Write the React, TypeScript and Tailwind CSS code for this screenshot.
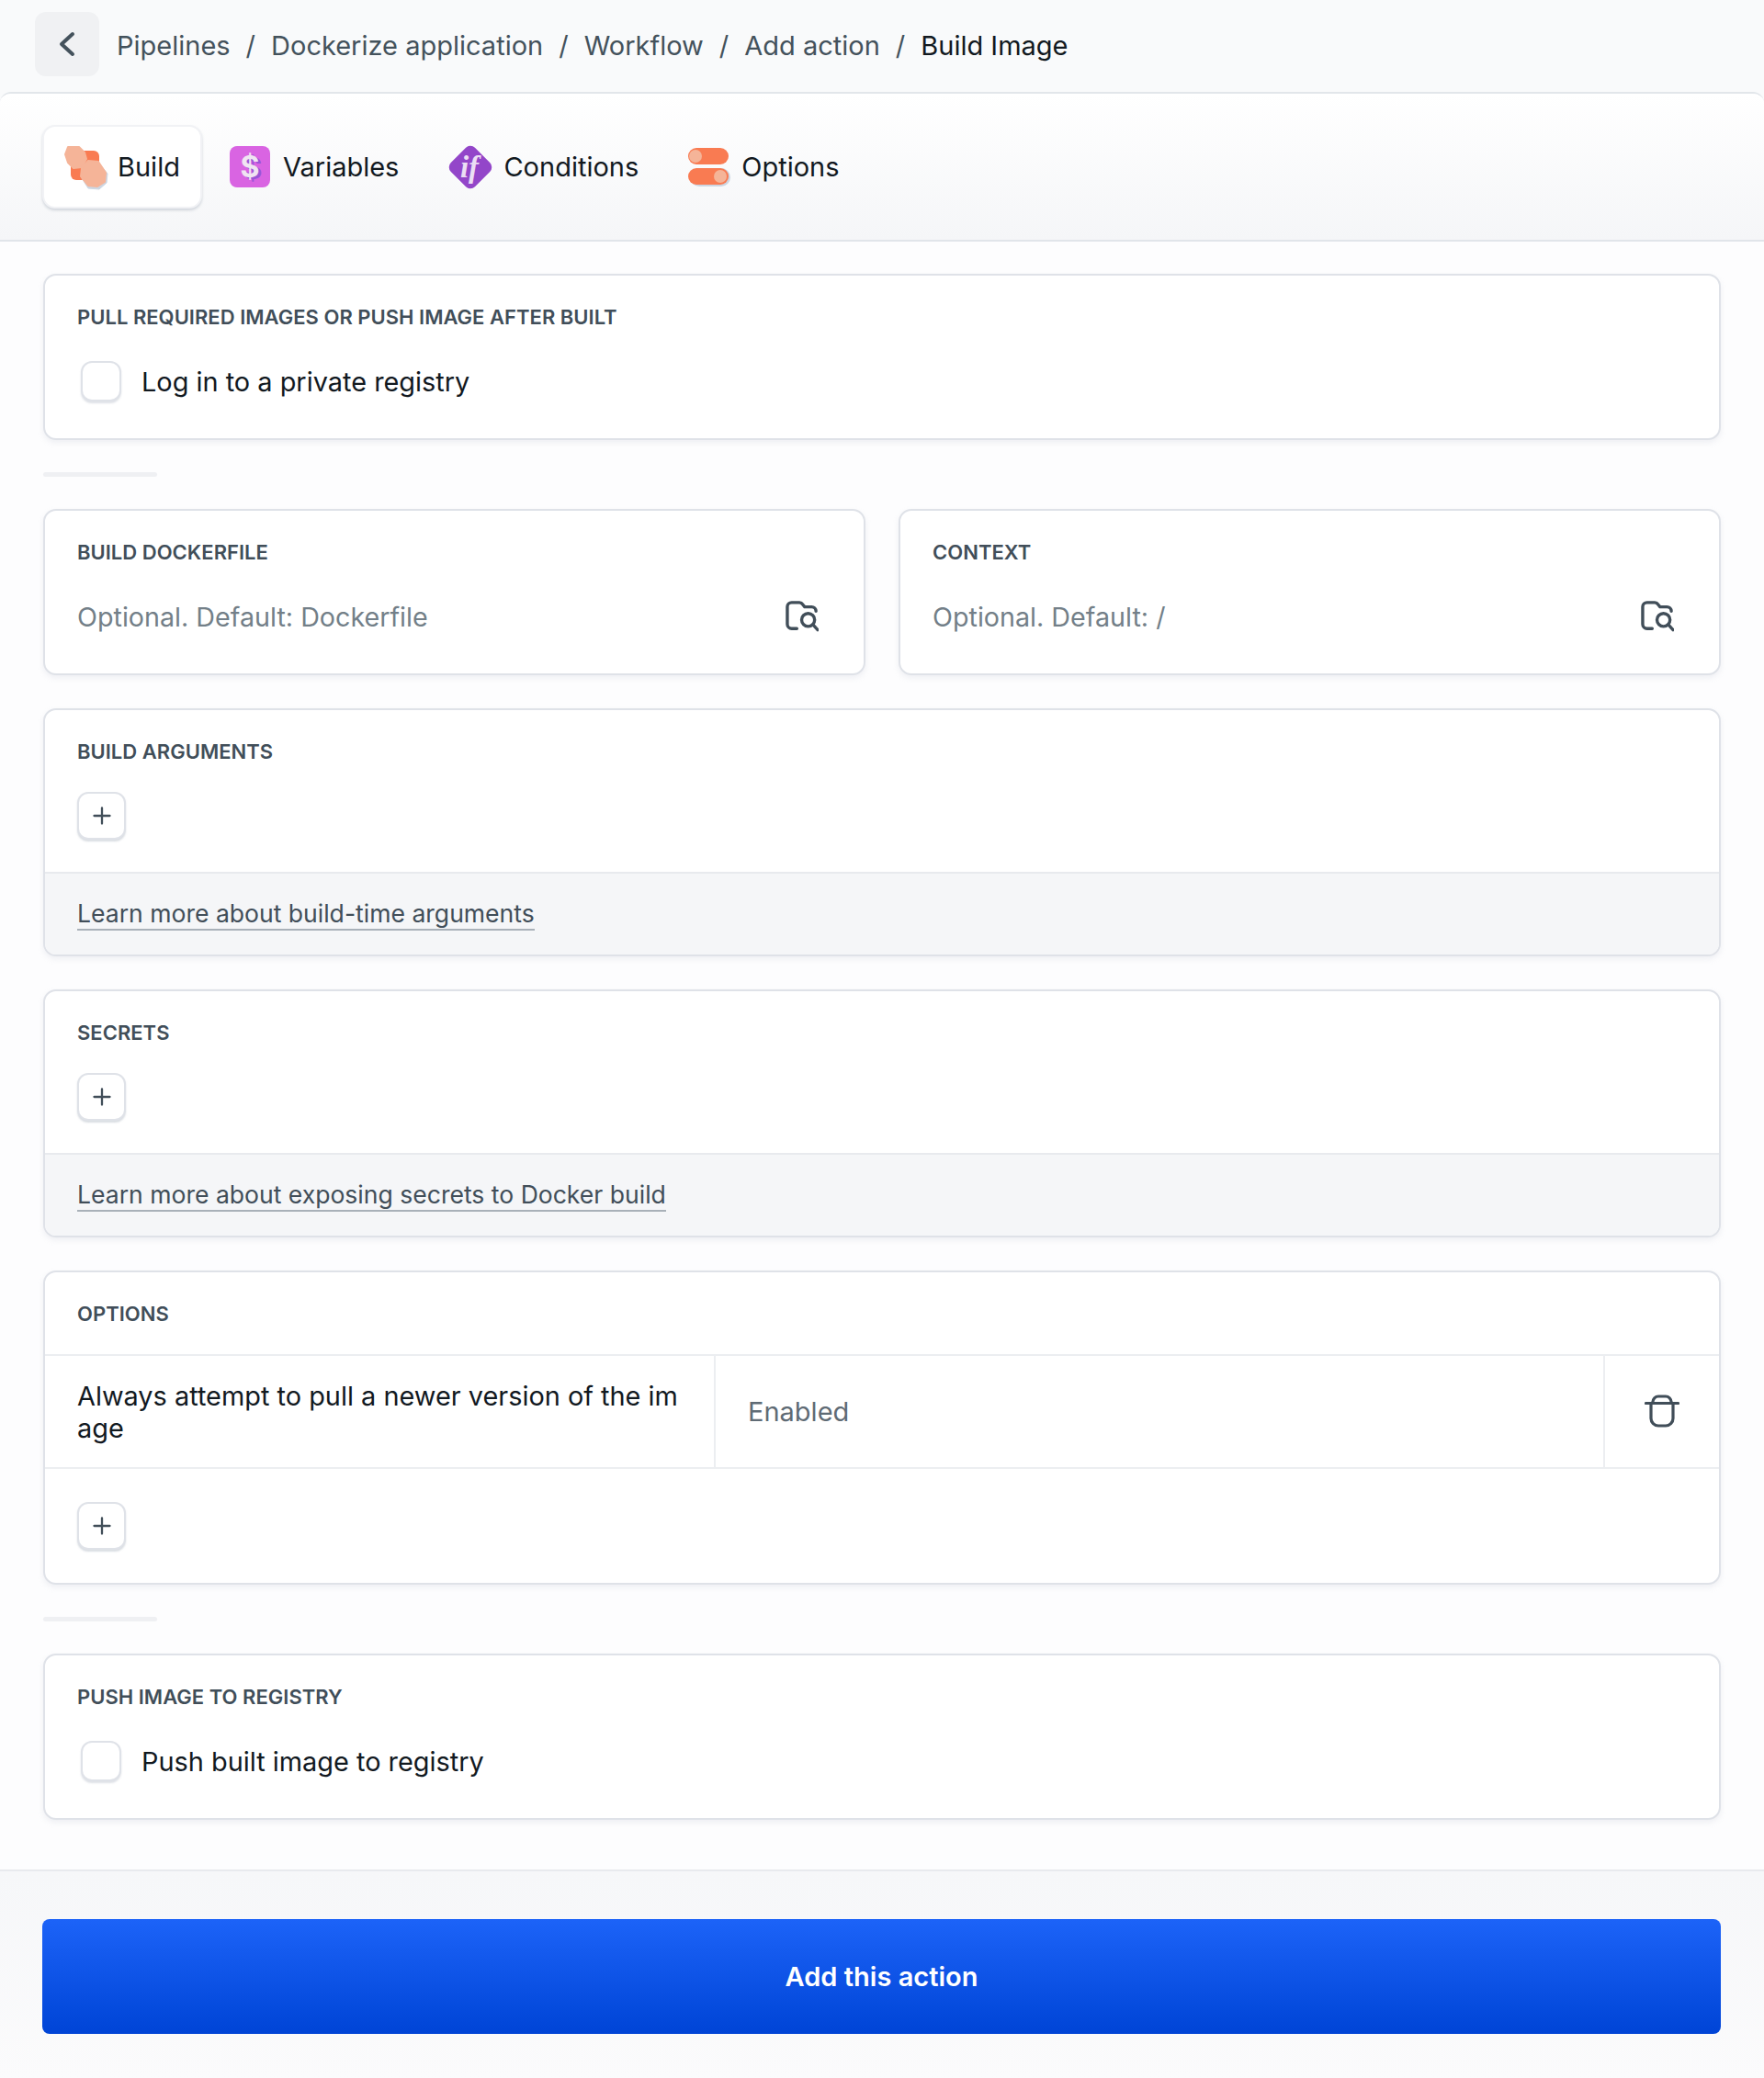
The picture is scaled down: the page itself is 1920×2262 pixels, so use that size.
import React from "react";

const FONT = "font-['Inter','Liberation_Sans',sans-serif]";

function Label({ children }: { children: React.ReactNode }) {
  return <div className="h-[24px] text-[22px] leading-[24px] font-semibold tracking-[0.02px] text-[#414e59]">{children}</div>;
}

function FolderSearch() {
  return (
    <svg width="36" height="34" viewBox="0 0 38 36" fill="none" stroke="#414e59" strokeWidth="3.6" strokeLinecap="round" strokeLinejoin="round">
      <path d="M13 32H7a5 5 0 0 1-5-5V7a5 5 0 0 1 5-5h9c2 0 3 1 4 2.5L22 7h8a5 5 0 0 1 5 5" />
      <circle cx="26" cy="22" r="7.5" />
      <path d="M31.5 27.5L37 33.5" />
    </svg>
  );
}

function Trash() {
  return (
    <svg className="mb-[2px]" width="38" height="36" viewBox="0 0 38 36" fill="none" stroke="#414e59" strokeWidth="3.2" strokeLinecap="round" strokeLinejoin="round">
      <path d="M1.5 9.5H36.5" />
      <path d="M9 9V8a6 6 0 0 1 6-6h8a6 6 0 0 1 6 6v1" />
      <path d="M7 10v16a8 8 0 0 0 8 8h8a8 8 0 0 0 8-8V10" />
    </svg>
  );
}

function Plus() {
  return (
    <button className="w-[53px] h-[52px] rounded-[12px] border-2 border-[#dfe2e8] bg-white shadow-[0_2px_2px_rgba(150,160,175,0.35)] flex items-center justify-center">
      <svg width="20" height="20" viewBox="0 0 20 20" fill="none" stroke="#414e59" strokeWidth="2.3" strokeLinecap="round">
        <path d="M10 1.5V18.5M1.5 10H18.5" />
      </svg>
    </button>
  );
}

function Checkbox({ text }: { text: string }) {
  return (
    <div className="mt-[36px] h-[44px] pl-[4px] flex items-center gap-[22px]">
      <div className="w-[44px] h-[44px] rounded-[12px] border-2 border-[#dfe2e8] bg-white shadow-[0_2px_2px_rgba(150,160,175,0.3)]" />
      <span className="pt-[1px] text-[28.9px] text-[#12191f]">{text}</span>
    </div>
  );
}

function Card({ children, className = "" }: { children: React.ReactNode; className?: string }) {
  return (
    <div className={"rounded-[14px] border-2 border-[#dfe2e8] bg-white shadow-[0_3px_6px_rgba(170,180,195,0.18)] overflow-hidden " + className}>
      {children}
    </div>
  );
}

function CheckCard({ label, text }: { label: string; text: string }) {
  return (
    <Card>
      <div className="pt-[33px] px-[35px] pb-[40px]">
        <Label>{label}</Label>
        <Checkbox text={text} />
      </div>
    </Card>
  );
}

function InputCard({ label, placeholder }: { label: string; placeholder: string }) {
  return (
    <Card className="flex-1">
      <div className="pt-[33px] px-[35px] pb-[40px]">
        <Label>{label}</Label>
        <div className="mt-[36px] h-[44px] flex items-center justify-between pr-[14px]">
          <span className="pt-[1px] text-[28.7px] text-[#737f88]">{placeholder}</span>
          <FolderSearch />
        </div>
      </div>
    </Card>
  );
}

function AddCard({ label, link }: { label: string; link: string }) {
  return (
    <Card>
      <div className="pt-[33px] px-[35px] pb-[35px] border-b-2 border-[#e8eaee]">
        <Label>{label}</Label>
        <div className="mt-[32px]">
          <Plus />
        </div>
      </div>
      <div className="h-[88px] bg-[#f5f6f8] px-[35px] flex items-center">
        <span className="text-[26.55px] leading-[34px] text-[#414e59] border-b-2 border-[#a9b1b9]">{link}</span>
      </div>
    </Card>
  );
}

function Divider() {
  return <div className="w-[124px] h-[5px] rounded-full bg-[#eff0f3] my-[35px]" />;
}

function BuildIcon() {
  return (
    <svg width="48" height="50" viewBox="0 0 48 50" strokeLinejoin="round">
      <rect x="7" y="7" width="31" height="32" rx="6" fill="#f97b52" />
      <polygon points="4,3 16,3 22,9 24,16 19,25 10,26 4,20 1,11" fill="#f5b498" stroke="#f5b498" strokeWidth="2" />
      <polygon points="27,20 38,21 47,32 46,42 38,49 26,48 19,37 20,27" fill="#cdd6e2" stroke="#cdd6e2" strokeWidth="1" />
      <polygon points="26,18 37,19 45,31 44,41 36,46 26,45 18,35 19,26" fill="#f5b498" stroke="#f5b498" strokeWidth="2" />
    </svg>
  );
}

function VariablesIcon() {
  return (
    <svg width="44" height="45" viewBox="0 0 44 45">
      <rect width="44" height="45" rx="8" fill="#d964e2" />
      <text x="25" y="36" textAnchor="middle" fontFamily="Inter, sans-serif" fontSize="32" fontWeight="700" fill="#9a55d6">$</text>
      <text x="22" y="34" textAnchor="middle" fontFamily="Inter, sans-serif" fontSize="32" fontWeight="700" fill="#f0e4f2">$</text>
    </svg>
  );
}

function ConditionsIcon() {
  return (
    <svg width="48" height="48" viewBox="0 0 48 48">
      <rect x="5.5" y="5.5" width="37" height="37" rx="7" fill="#9346c9" transform="rotate(45 24 24)" />
      <text x="23" y="35" textAnchor="middle" fontFamily="'Liberation Serif', serif" fontStyle="italic" fontWeight="700" fontSize="33" fill="#ecdff4">if</text>
    </svg>
  );
}

function OptionsIcon() {
  return (
    <svg width="46" height="42" viewBox="0 0 46 42">
      <rect x="2" y="22" width="44" height="20" rx="10" fill="#cdd6e2" />
      <rect width="44" height="18" rx="9" fill="#f97b52" />
      <circle cx="8" cy="9" r="7" fill="#f5b498" />
      <rect y="22" width="44" height="18" rx="9" fill="#f97b52" />
      <circle cx="35" cy="31" r="7" fill="#f5b498" />
    </svg>
  );
}

function Tab({ icon, text, active = false, className = "" }: { icon: React.ReactNode; text: string; active?: boolean; className?: string }) {
  return (
    <div
      className={
        "h-[91px] flex items-center rounded-[14px] " +
        (active ? "bg-white border-2 border-[#f1f2f5] shadow-[0_2px_3px_rgba(150,160,175,0.4)] " : "") +
        className
      }
    >
      {icon}
      <span className="text-[29px] text-[#12191f]">{text}</span>
    </div>
  );
}

function Crumb({ children, current = false }: { children: React.ReactNode; current?: boolean }) {
  return <span className={current ? "text-[#12191f]" : "text-[#44525c]"}>{children}</span>;
}

export default function App() {
  return (
    <div className={FONT + " w-[1920px] h-[2262px] bg-[#f9fafb] flex flex-col overflow-hidden"}>
      <header className="h-[100px] shrink-0 flex items-center pl-[38px]">
        <div className="self-start mt-[13px] w-[70px] h-[70px] rounded-[12px] bg-[#f0f1f3] flex items-center justify-center">
          <svg width="20" height="28" viewBox="0 0 20 28" fill="none" stroke="#44525c" strokeWidth="4" strokeLinecap="round" strokeLinejoin="round">
            <path d="M16 3L4 14L16 25" />
          </svg>
        </div>
        <nav className="ml-[19px] flex items-center gap-[17px] text-[29px]">
          <Crumb>Pipelines</Crumb>
          <span className="text-[#44525c]">/</span>
          <Crumb>Dockerize application</Crumb>
          <span className="text-[#44525c]">/</span>
          <Crumb>Workflow</Crumb>
          <span className="text-[#44525c]">/</span>
          <Crumb>Add action</Crumb>
          <span className="text-[#44525c]">/</span>
          <Crumb current>Build Image</Crumb>
        </nav>
      </header>

      <div className="flex-1 bg-[#fdfdfe] rounded-t-[12px] border-t-2 border-[#e2e6ea] flex flex-col overflow-hidden">
        <div className="h-[161px] shrink-0 bg-gradient-to-b from-white to-[#f5f6f8] border-b-2 border-[#e1e5ea] pl-[46px] pt-[34px]">
          <div className="flex items-start gap-[6px]">
            <Tab active icon={<BuildIcon />} text="Build" className="px-[22px] gap-[10px]" />
            <Tab icon={<VariablesIcon />} text="Variables" className="px-[24px] gap-[14px]" />
            <Tab icon={<ConditionsIcon />} text="Conditions" className="px-[24px] gap-[12px]" />
            <Tab icon={<OptionsIcon />} text="Options" className="px-[24px] gap-[12px]" />
          </div>
        </div>

        <main className="px-[47px] pt-[35px] flex flex-col h-[1772px] shrink-0">
          <CheckCard label="PULL REQUIRED IMAGES OR PUSH IMAGE AFTER BUILT" text="Log in to a private registry" />
          <Divider />
          <div className="flex gap-[36px]">
            <InputCard label="BUILD DOCKERFILE" placeholder="Optional. Default: Dockerfile" />
            <InputCard label="CONTEXT" placeholder="Optional. Default: /" />
          </div>
          <div className="mt-[36px] flex flex-col gap-[36px]">
            <AddCard label="BUILD ARGUMENTS" link="Learn more about build-time arguments" />
            <AddCard label="SECRETS" link="Learn more about exposing secrets to Docker build" />
            <Card>
              <div className="h-[91px] pt-[33px] px-[35px] border-b-2 border-[#eceef1]">
                <Label>OPTIONS</Label>
              </div>
              <div className="flex h-[123px] border-b-2 border-[#eceef1]">
                <div className="w-[730px] shrink-0 border-r-2 border-[#eceef1] px-[35px] flex items-center">
                  <span className="text-[28.9px] leading-[35px] text-[#12191f] break-all">
                    Always attempt to pull a newer version of the image
                  </span>
                </div>
                <div className="flex-1 px-[35px] flex items-center text-[29px] text-[#5f6b75]">Enabled</div>
                <div className="w-[126px] shrink-0 border-l-2 border-[#eceef1] flex items-center justify-center">
                  <Trash />
                </div>
              </div>
              <div className="h-[124px] px-[35px] flex items-center">
                <Plus />
              </div>
            </Card>
          </div>
          <Divider />
          <CheckCard label="PUSH IMAGE TO REGISTRY" text="Push built image to registry" />
        </main>

        <footer className="flex-1 border-t-2 border-[#e8eaee] bg-gradient-to-b from-[#f6f7f9] to-[#fbfbfc] pl-[46px] pr-[47px] pt-[52px]">
          <button className="w-full h-[125px] pt-[1px] rounded-[8px] bg-gradient-to-b from-[#1c63f8] to-[#0044d6] text-white text-[29px] font-semibold">
            Add this action
          </button>
        </footer>
      </div>
    </div>
  );
}
